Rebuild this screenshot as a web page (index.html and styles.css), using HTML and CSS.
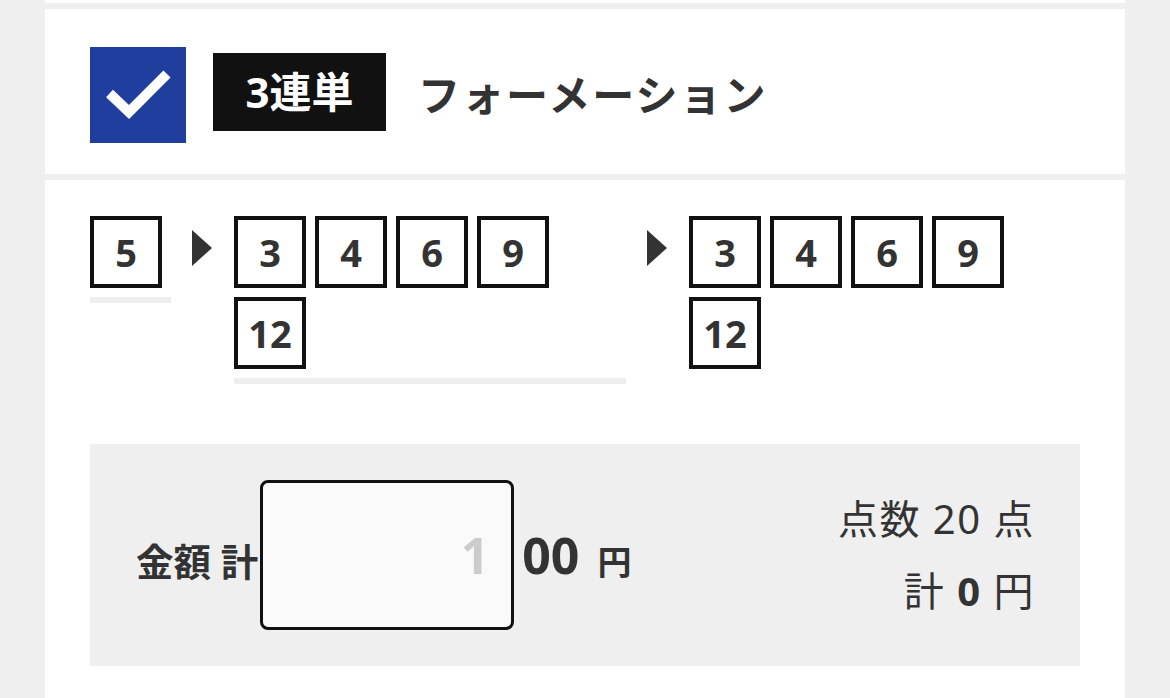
FILE: index.html
```html
<!DOCTYPE html>
<html lang="ja">
  <head>
    <meta charset="UTF-8" />
    <meta name="viewport" content="width=device-width, initial-scale=1.0" />
    <title>3連単 フォーメーション</title>
    <link rel="stylesheet" href="styles.css">
  </head>

  <body>
    <div class="wrap">
      <div class="card card-prev"></div>

      <!-- 券種ヘッダー -->
      <div class="card card-head">
        <div class="check">
          <svg width="96" height="96" viewBox="0 0 96 96">
            <path d="M19.5 46.5 L39 65 L77 27" fill="none" stroke="#fff" stroke-width="10" stroke-linejoin="miter" />
          </svg>
        </div>
        <div class="head-text">
          <span class="bet-type">3連単</span>
          <span class="bet-method">フォーメーション</span>
        </div>
      </div>

      <!-- 選択内容 -->
      <div class="card card-body">
        <div class="formation">
          <div class="group group-1">
            <span class="num">5</span>
          </div>
          <span class="arrow"></span>
          <div class="group group-2">
            <span class="num">3</span>
            <span class="num">4</span>
            <span class="num">6</span>
            <span class="num">9</span>
            <span class="num">12</span>
          </div>
          <span class="arrow"></span>
          <div class="group group-3">
            <span class="num">3</span>
            <span class="num">4</span>
            <span class="num">6</span>
            <span class="num">9</span>
            <span class="num">12</span>
          </div>
        </div>

        <div class="amount">
          <div class="amount-input">
            <span class="amount-label">金額 計</span>
            <input class="amount-field" type="text" placeholder="1" />
            <span class="amount-unit">00</span>
            <span class="amount-yen">円</span>
          </div>
          <div class="summary">
            <div>点数 20 点</div>
            <div>計 <b>0</b> 円</div>
          </div>
        </div>
      </div>
    </div>
  </body>
</html>
```

FILE: styles.css
```css
body {
  margin: 0;
  background-color: #efefef;
  font-family: "Noto Sans", "Noto Sans CJK JP", sans-serif;
  color: #333;
}

.wrap {
  margin: 0 45px;
}

.card {
  background-color: #fff;
  margin-bottom: 6px;
}

.card-prev {
  height: 3px;
}

/* ヘッダー */
.card-head {
  height: 165px;
  box-sizing: border-box;
  padding: 38px 45px 0;
  display: flex;
  align-items: flex-start;
}

.check {
  width: 96px;
  height: 96px;
  background-color: #1f3e9e;
}

.check svg {
  display: block;
}

.head-text {
  display: flex;
  align-items: center;
  margin-top: 6px;
  margin-left: 27px;
}

.bet-type {
  width: 173px;
  height: 78px;
  line-height: 78px;
  text-align: center;
  background-color: #111;
  color: #fff;
  font-size: 42px;
  font-weight: bold;
}

.bet-method {
  margin-left: 32px;
  font-size: 42px;
  font-weight: bold;
  letter-spacing: 2px;
}

/* 選択内容 */
.card-body {
  padding: 36px 45px 40px;
}

.formation {
  display: flex;
  align-items: flex-start;
}

.group {
  display: flex;
  flex-wrap: wrap;
  flex-shrink: 0;
  border-bottom: 6px solid #eee;
}

.group-1 {
  width: 81px;
}

.group-2 {
  width: 392px;
}

.group-3 {
  flex: 1;
  border-bottom-color: transparent;
}

.num {
  width: 72px;
  height: 72px;
  box-sizing: border-box;
  border: 4px solid #111;
  margin: 0 9px 9px 0;
  display: flex;
  justify-content: center;
  align-items: center;
  font-size: 38px;
  font-weight: bold;
}

.arrow {
  flex-shrink: 0;
  width: 0;
  height: 0;
  margin: 14px 22px 0 21px;
  border-left: 20px solid #333;
  border-top: 18px solid transparent;
  border-bottom: 18px solid transparent;
}

/* 金額 */
.amount {
  margin-top: 60px;
  height: 222px;
  box-sizing: border-box;
  padding: 0 45px 0 46px;
  background-color: #efefef;
  display: flex;
  align-items: center;
}

.amount-input {
  display: flex;
  align-items: center;
}

.amount-label {
  font-size: 37.5px;
  font-weight: bold;
  margin: 8px 2px 0 0;
}

.amount-field {
  width: 254px;
  height: 150px;
  box-sizing: border-box;
  border: 3px solid #111;
  border-radius: 8px;
  background-color: #fafafa;
  padding: 0 22px 0 10px;
  text-align: right;
  font-family: inherit;
  font-size: 50px;
  font-weight: bold;
  color: #333;
}

.amount-field::placeholder {
  color: #ccc;
}

.amount-unit {
  margin-left: 8px;
  font-size: 50px;
  font-weight: bold;
}

.amount-yen {
  margin: 10px 0 0 18px;
  font-size: 34px;
  font-weight: bold;
}

.summary {
  margin-left: auto;
  text-align: right;
  font-size: 40px;
  line-height: 72px;
  letter-spacing: 1.5px;
}
```
